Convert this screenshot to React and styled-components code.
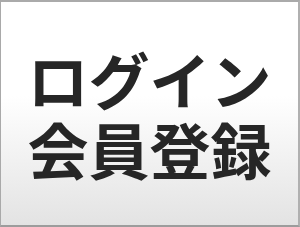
import React from 'react'
import styled, { createGlobalStyle } from 'styled-components'

const GlobalStyle = createGlobalStyle`
  html, body {
    margin: 0;
    padding: 0;
  }
  body {
    width: 300px;
    height: 227px;
    overflow: hidden;
    font-family: "Noto Sans CJK JP", "Noto Sans", sans-serif;
  }
`

const Button = styled.a`
  box-sizing: border-box;
  width: 300px;
  height: 227px;
  display: flex;
  align-items: center;
  justify-content: center;
  border: 1px solid #a9a9a9;
  border-top: 2px solid #aaaaaa;
  border-right: 2px solid #b0b0b0;
  border-bottom: 2px solid #9c9c9c;
  background: linear-gradient(to bottom, #ffffff 0%, #ffffff 42%, #e3e3e3 100%);
  color: #262626;
  text-decoration: none;
  cursor: pointer;
`

const Label = styled.span`
  display: block;
  font-size: 61px;
  font-weight: 700;
  line-height: 70px;
  text-align: center;
  white-space: pre-line;
`

export default function App() {
  return (
    <>
      <GlobalStyle />
      <Button href="#">
        <Label>{'ログイン\n会員登録'}</Label>
      </Button>
    </>
  )
}
